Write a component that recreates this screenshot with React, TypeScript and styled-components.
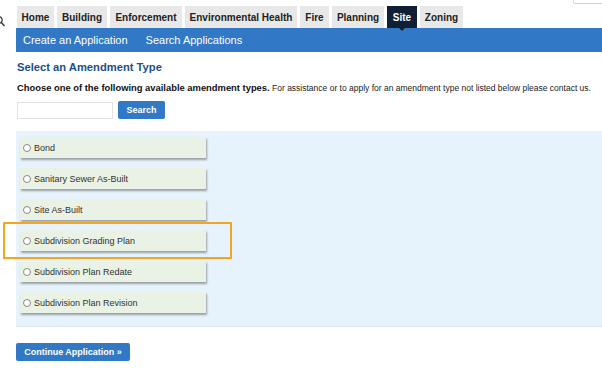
import React from "react";
import styled, { createGlobalStyle } from "styled-components";

const Global = createGlobalStyle`
  html, body { margin: 0; padding: 0; background: #fff; }
  body { font-family: "Liberation Sans", Arial, sans-serif; width: 602px; height: 370px; overflow: hidden; }
`;

const Page = styled.div`
  position: relative;
  width: 602px;
  height: 370px;
  overflow: hidden;
`;

const TopBox = styled.div`
  position: absolute;
  top: -9px;
  right: -4px;
  width: 31px;
  height: 11px;
  border: 1px solid #d6d6d6;
  border-radius: 2px;
`;

const TabRow = styled.div`
  display: flex;
  align-items: flex-end;
  height: 28px;
`;

const Magnifier = styled.svg`
  width: 10px;
  height: 12px;
  margin-left: -4px;
  margin-right: 11px;
  align-self: flex-end;
`;

const Tabs = styled.div`
  display: flex;
  gap: 3px;
  height: 22px;
`;

const Tab = styled.div<{ $active?: boolean }>`
  display: flex;
  align-items: center;
  justify-content: center;
  position: relative;
  height: 22px;
  background: ${(p) => (p.$active ? "#0f2035" : "#e8e8e8")};
  color: ${(p) => (p.$active ? "#fff" : "#222")};
  font-size: 10px;
  font-weight: bold;
  white-space: nowrap;
  box-sizing: border-box;
  ${(p) =>
    p.$active &&
    `&::after {
      content: "";
      position: absolute;
      bottom: -3px;
      left: 50%;
      margin-left: -3px;
      border-left: 3px solid transparent;
      border-right: 3px solid transparent;
      border-top: 3px solid #0f2035;
    }`}
`;

const SubNav = styled.div`
  display: flex;
  align-items: center;
  gap: 18px;
  height: 24px;
  margin-left: 16px;
  padding-left: 7px;
  background: #3178c6;
`;

const SubLink = styled.span`
  color: #fff;
  font-size: 11px;
`;

const Content = styled.div`
  padding: 0 0 0 16px;
`;

const Title = styled.h2`
  margin: 8px 0 0 1px;
  font-size: 11.2px;
  font-weight: bold;
  color: #1d4f8f;
  line-height: 14px;
`;

const Instructions = styled.p`
  margin: 8px 0 0 1px;
  font-size: 8.5px;
  color: #222;
  line-height: 11px;
  white-space: nowrap;
  b { font-weight: bold; font-size: 9.4px; color: #111; }
`;

const SearchRow = styled.div`
  display: flex;
  align-items: center;
  gap: 5px;
  margin: 7px 0 0 1px;
`;

const SearchInput = styled.div`
  width: 94px;
  height: 15px;
  border: 1px solid #e2e2e2;
  background: #fff;
`;

const BlueButton = styled.div`
  display: flex;
  align-items: center;
  justify-content: center;
  height: 18px;
  background: #3178c6;
  border-radius: 2px;
  color: #fff;
  font-size: 9px;
  font-weight: bold;
  white-space: nowrap;
  box-sizing: border-box;
`;

const Panel = styled.div`
  display: flex;
  flex-direction: column;
  gap: 10px;
  margin-top: 12px;
  padding: 6px 0 13px 4px;
  background: #e7f3fc;
  border-bottom: 1px solid #dbe6ee;
`;

const Option = styled.div`
  display: flex;
  align-items: center;
  gap: 3px;
  width: 186px;
  height: 21px;
  padding-left: 3px;
  box-sizing: border-box;
  background: #e9f2e4;
  box-shadow: 1px 2px 2px rgba(0, 0, 0, 0.35);
  font-size: 9px;
  color: #333;
`;

const Radio = styled.span`
  width: 6px;
  height: 6px;
  border: 1px solid #888;
  border-radius: 50%;
  background: #fff;
`;

const Highlight = styled.div`
  position: absolute;
  left: 3px;
  top: 222px;
  width: 229px;
  height: 37px;
  border: 2px solid #f2a51e;
  box-sizing: border-box;
  border-radius: 1px;
`;

const Footer = styled.div`
  margin-top: 16px;
  display: flex;
`;

const options = [
  "Bond",
  "Sanitary Sewer As-Built",
  "Site As-Built",
  "Subdivision Grading Plan",
  "Subdivision Plan Redate",
  "Subdivision Plan Revision",
];

const tabs: [string, number][] = [
  ["Home", 37],
  ["Building", 50],
  ["Enforcement", 72],
  ["Environmental Health", 112],
  ["Fire", 29],
  ["Planning", 52],
  ["Site", 30],
  ["Zoning", 43],
];

export default function App() {
  return (
    <Page>
      <Global />
      <TopBox />
      <TabRow>
        <Magnifier viewBox="0 0 10 12">
          <circle cx="3" cy="4" r="3.2" fill="none" stroke="#333" strokeWidth="1.2" />
          <line x1="5.3" y1="6.5" x2="8.5" y2="10" stroke="#333" strokeWidth="1.4" />
        </Magnifier>
        <Tabs>
          {tabs.map(([t, w]) => (
            <Tab key={t} $active={t === "Site"} style={{ width: w }}>
              {t}
            </Tab>
          ))}
        </Tabs>
      </TabRow>
      <SubNav>
        <SubLink>Create an Application</SubLink>
        <SubLink>Search Applications</SubLink>
      </SubNav>
      <Content>
        <Title>Select an Amendment Type</Title>
        <Instructions>
          <b>Choose one of the following available amendment types.</b> For assistance or to apply for an
          amendment type not listed below please contact us.
        </Instructions>
        <SearchRow>
          <SearchInput />
          <BlueButton style={{ width: 47 }}>Search</BlueButton>
        </SearchRow>
        <Panel>
          {options.map((o) => (
            <Option key={o}>
              <Radio />
              {o}
            </Option>
          ))}
        </Panel>
        <Footer>
          <BlueButton style={{ width: 114 }}>Continue Application »</BlueButton>
        </Footer>
      </Content>
      <Highlight />
    </Page>
  );
}
